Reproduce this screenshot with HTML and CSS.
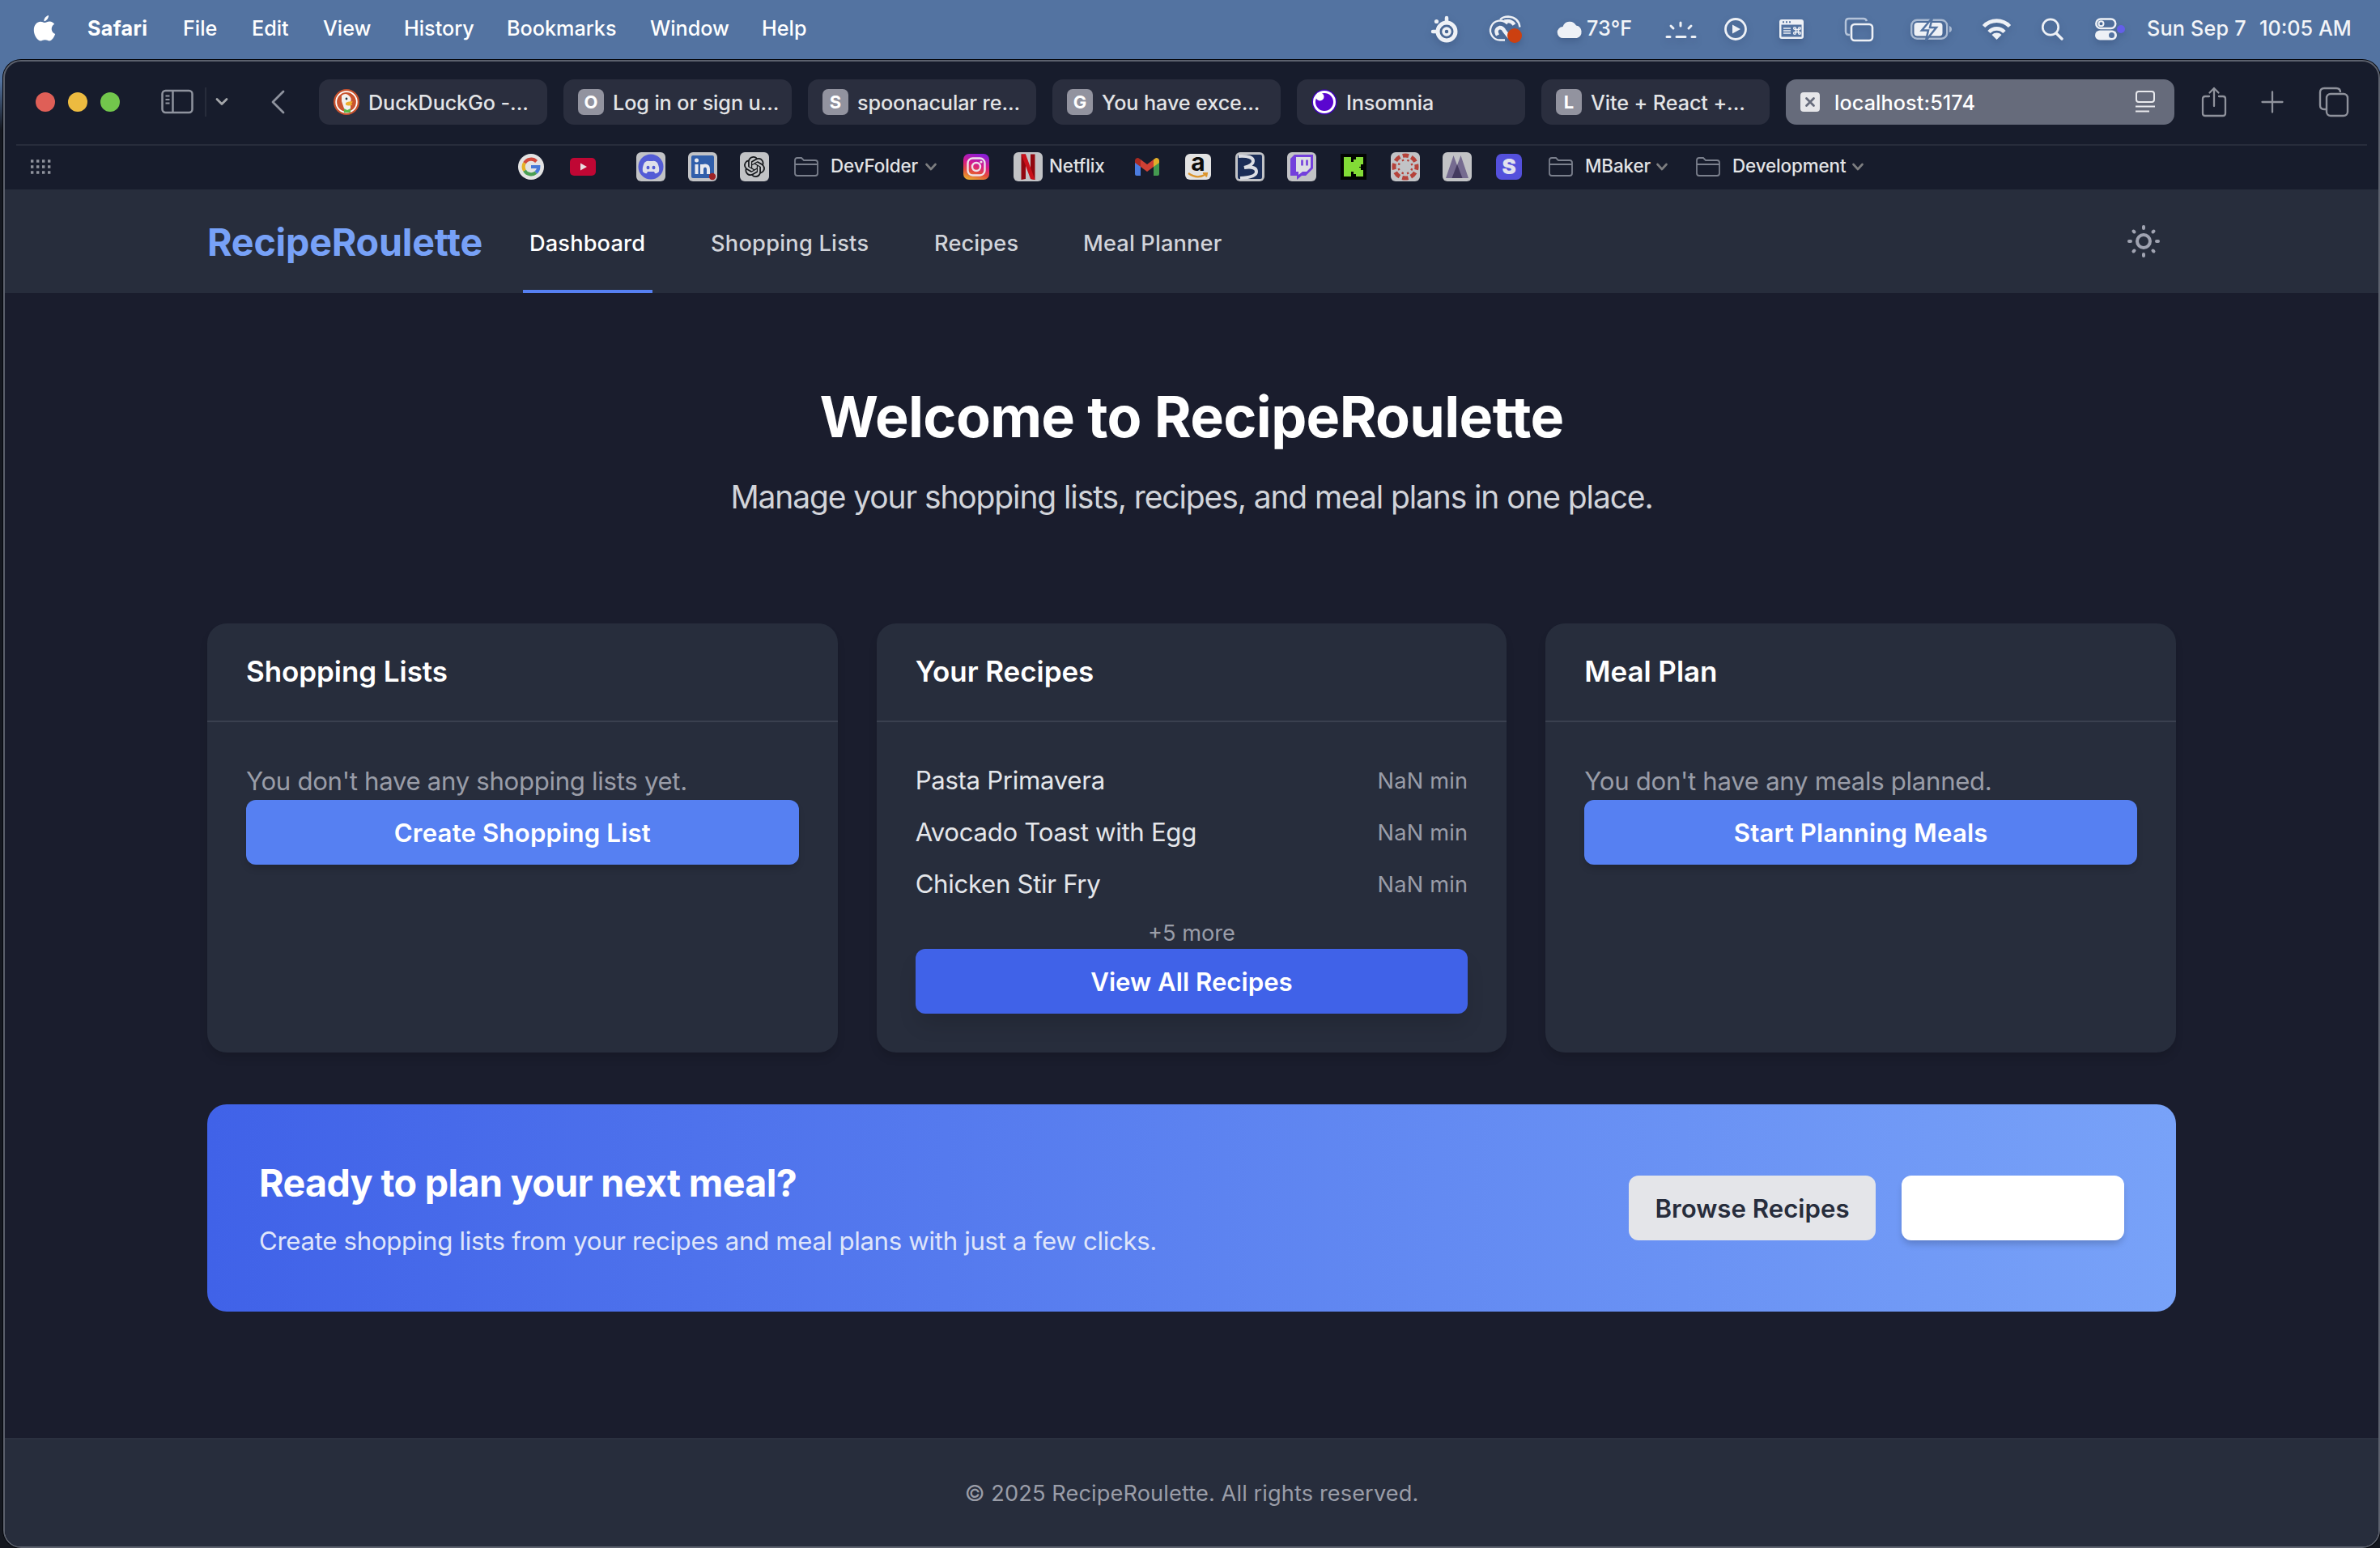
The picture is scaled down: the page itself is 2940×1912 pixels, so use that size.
FILE: index.html
```html
<!DOCTYPE html>
<html lang="en">
<head>
<meta charset="utf-8">
<title>RecipeRoulette</title>
<link rel="stylesheet" href="styles.css">
</head>
<body>
<svg class="defs" width="0" height="0">
  <symbol id="folder" viewBox="0 0 30 24"><path d="M1 20V4q0-3 3-3h5l3 3h14q3 0 3 3v13q0 3-3 3H4q-3 0-3-3zM1 9h28" fill="none" stroke="#7b808d" stroke-width="1.8"/></symbol>
  <symbol id="chev" viewBox="0 0 14 10"><path d="M1.5 2l5.500 6 5.500-6" fill="none" stroke="#7d7e80" stroke-width="2.600" stroke-linecap="round" stroke-linejoin="round"/></symbol>
</svg>

<div class="menubar">
  <nav class="menus">
    <svg width="28" height="34" viewBox="0 0 28 34"><path fill="#fff" d="M19 1c.3 3-2.300 7-5.600 7.200C13 5 16 1.500 19 1zM14 10c2 0 3.500-1.500 6.300-1.500 2.400 0 4.600 1.300 5.900 3.300-5.200 3-4.300 10.300 1 12.300-1.400 4-4.200 8.400-7.200 8.400-2 0-2.800-1.200-5.400-1.200s-3.400 1.200-5.300 1.200C5.400 32.500.8 25.600.8 19.200c0-6.600 4.300-10.400 8.200-10.400 2.200 0 3.600 1.200 5 1.200z"/></svg>
    <span class="app">Safari</span><span>File</span><span>Edit</span><span>View</span><span>History</span><span>Bookmarks</span><span>Window</span><span>Help</span>
  </nav>
  <div class="status">
    <svg width="40" height="40" viewBox="0 0 40 40"><g transform="translate(4 4)"><circle cx="19" cy="19" r="11" fill="none" stroke="#eef1f6" stroke-width="5"/><circle cx="19" cy="19" r="4" fill="none" stroke="#eef1f6" stroke-width="3.500"/><path d="M19 2v6M2 19h6" stroke="#eef1f6" stroke-width="4.500" stroke-linecap="round"/><circle cx="6.500" cy="6.500" r="2.600" fill="#eef1f6"/></g></svg>
    <svg width="44" height="40" viewBox="0 0 44 40"><g fill="none" stroke="#eef1f6"><path d="M15 8Q19 4.500 25 4.500q13 1 14.500 13" stroke-width="2.300"/><path d="M21 33.500H15.500A12 12 0 1 1 24 13.500" stroke-width="2.300"/><path d="M20.500 10.500q8-2 12 4" stroke-width="4.500"/><path d="M12 27.500q-4-7 2.500-9.500 4 0 6 4.500l6 7.500" stroke-width="4.500"/></g><circle cx="33" cy="28" r="9" fill="#cc4010"/></svg>
    <svg width="34" height="40" viewBox="0 0 34 40"><path fill="#eef1f6" d="M9 31a7 7 0 0 1-.5-14A9 9 0 0 1 25 15.500 8 8 0 0 1 26 31z"/></svg>
    <span class="temp">73°F</span>
    <svg width="42" height="40" viewBox="0 0 42 40"><path d="M4 29.500h4M16 29.500h11M35 29.500h4M21 12v4M9 16l3 3M34 16l-3 3" stroke="#eef1f6" stroke-width="3" stroke-linecap="round"/></svg>
    <svg width="32" height="40" viewBox="0 0 32 40"><circle cx="16" cy="20" r="12.500" fill="none" stroke="#eef1f6" stroke-width="2.800"/><path d="M12 14.500v11l10-5.500z" fill="#eef1f6"/></svg>
    <svg width="34" height="40" viewBox="0 0 34 40"><rect x="2" y="8" width="30" height="24" rx="3" fill="#eef1f6"/><rect x="4.500" y="14.500" width="25" height="15" fill="#5373a1"/><path d="M7 19h9M7 22h9M7 25h9" stroke="#eef1f6" stroke-width="1.600"/><path d="M6 11.200h2M10 11.200h2M14 11.200h2" stroke="#5373a1" stroke-width="2"/><path d="M21 20.500h6M21 23.500h6M22.500 19v6M25.500 19v6" stroke="#eef1f6" stroke-width="1.500"/><g fill="none" stroke="#eef1f6" stroke-width="1.300"><circle cx="21" cy="19" r="1.400"/><circle cx="27" cy="19" r="1.400"/><circle cx="21" cy="25" r="1.400"/><circle cx="27" cy="25" r="1.400"/></g></svg>
    <svg width="40" height="40" viewBox="0 0 40 40"><path d="M8 27H7q-4 0-4-4V11q0-4 4-4h18q3 0 4 3" fill="none" stroke="#b4c3d9" stroke-width="2.500"/><rect x="10" y="14" width="26" height="20" rx="4" fill="none" stroke="#eef1f6" stroke-width="2.600"/></svg>
    <svg width="54" height="40" viewBox="0 0 54 40"><rect x="3.200" y="8.700" width="44" height="23" rx="7" fill="none" stroke="#a9bad2" stroke-width="2.400"/><path d="M50 16v8q3-1 3-4t-3-4z" fill="#a9bad2"/><rect x="6.500" y="12" width="35" height="16.500" rx="4" fill="#eef1f6"/><path d="M29 6L16 21.500h8L21 34l13-16h-8z" fill="#eef1f6" stroke="#5373a1" stroke-width="2.500"/></svg>
    <svg width="40" height="40" viewBox="0 0 40 40"><g fill="none" stroke="#eef1f6" stroke-width="4.600"><path d="M3.500 16.500a22 22 0 0 1 32 0"/><path d="M10 23.500a13 13 0 0 1 19 0"/></g><path d="M13.500 27a8.500 8.500 0 0 1 12 0l-6 6z" fill="#eef1f6"/></svg>
    <svg width="32" height="40" viewBox="0 0 32 40"><circle cx="13" cy="17.500" r="9.700" fill="none" stroke="#eef1f6" stroke-width="2.700"/><path d="M20 25l7 7" stroke="#eef1f6" stroke-width="3.400" stroke-linecap="round"/></svg>
    <svg width="46" height="40" viewBox="0 0 46 40"><rect x="3.300" y="7.500" width="24" height="11.500" rx="5.700" fill="none" stroke="#eef1f6" stroke-width="2.500"/><circle cx="9.500" cy="13.200" r="3" fill="none" stroke="#eef1f6" stroke-width="2"/><rect x="2" y="21.500" width="27" height="12" rx="6" fill="#eef1f6"/><circle cx="22.500" cy="27.500" r="3.500" fill="#5373a1"/><circle cx="34" cy="20" r="5" fill="#635fe8"/></svg>
    <span class="date">Sun Sep 7</span>
    <span class="time">10:05 AM</span>
  </div>
</div>

<div class="window">
  <div class="toolbar">
    <div class="lights"><i class="red"></i><i class="yellow"></i><i class="green"></i></div>
    <svg class="side" width="40" height="32" viewBox="0 0 40 32"><g fill="none" stroke="#8f939e" stroke-width="2.500"><rect x="1.500" y="2" width="37" height="27" rx="4"/><path d="M14.500 2v27"/><path d="M5.500 8.500h5M5.500 13h5M5.500 17.500h5" stroke-width="2"/></g></svg>
    <i class="vline"></i>
    <svg class="drop" width="16" height="12" viewBox="0 0 16 12"><path d="M2 2.500l6 6 6-6" fill="none" stroke="#a5a7ab" stroke-width="2.800" stroke-linecap="round" stroke-linejoin="round"/></svg>
    <svg class="back" width="20" height="32" viewBox="0 0 20 32"><path d="M16 3L3 16l13 13" fill="none" stroke="#8f939e" stroke-width="2.800" stroke-linecap="round" stroke-linejoin="round"/></svg>
    <div class="tabs">
      <div class="tab"><svg width="32" height="32" viewBox="0 0 32 32"><circle cx="16" cy="16" r="16" fill="#c9532f"/><circle cx="16" cy="16" r="12.800" fill="#c9532f" stroke="#fff" stroke-width="1.800"/><path d="M10 8q5-4 9 0 4 3 2 8v9q-4 2.500-7 2L10 15z" fill="#f3f0ee"/><path d="M15 17q4-2.500 9-1.500l-2 2.500 1.500 1.500q-5 2-8.500 0z" fill="#eeb02f"/><path d="M13 24l4 2 4-2v5h-8z" fill="#5cb848"/><circle cx="16" cy="12" r="1.400" fill="#223344"/></svg><span>DuckDuckGo -...</span></div>
      <div class="tab"><b class="fav">O</b><span>Log in or sign u...</span></div>
      <div class="tab"><b class="fav">S</b><span>spoonacular re...</span></div>
      <div class="tab"><b class="fav">G</b><span>You have exce...</span></div>
      <div class="tab"><svg width="32" height="32" viewBox="0 0 32 32"><circle cx="16" cy="16" r="15.500" fill="#4000bf"/><circle cx="16" cy="16" r="14" fill="#fff"/><circle cx="16" cy="16" r="11" fill="#5a06cf"/><circle cx="10.500" cy="9.500" r="5" fill="#fff"/></svg><span>Insomnia</span></div>
      <div class="tab"><b class="fav">L</b><span>Vite + React +...</span></div>
      <div class="tab active"><svg width="24" height="24" viewBox="0 0 24 24"><rect width="24" height="24" rx="4" fill="#e6e6e9"/><path d="M7.500 7.500l9 9M16.500 7.500l-9 9" stroke="#666b7b" stroke-width="2.800" stroke-linecap="round"/></svg><span>localhost:5174</span><svg class="reader" width="26" height="30" viewBox="0 0 26 30"><g fill="none" stroke="#e9eaee" stroke-width="2"><rect x="2" y="2" width="22" height="13" rx="3"/><path d="M1 20.500h24M1 26.500h17"/></g></svg></div>
    </div>
    <svg class="share" width="32" height="40" viewBox="0 0 32 40"><g fill="none" stroke="#8f929c" stroke-width="2.300" stroke-linecap="round" stroke-linejoin="round"><path d="M10 13H5q-3 0-3 3v18q0 3 3 3h22q3 0 3-3V16q0-3-3-3h-5M16 25V3M10.500 8.500L16 3l5.500 5.500"/></g></svg>
    <svg class="plus" width="28" height="28" viewBox="0 0 28 28"><path d="M14 1.500v25M1.500 14h25" stroke="#8f929c" stroke-width="2.300" stroke-linecap="round"/></svg>
    <svg class="stack" width="38" height="38" viewBox="0 0 38 38"><g fill="none" stroke="#8f929c" stroke-width="2.400"><path d="M9 28H7q-5 0-5-5V7q0-5 5-5h15q5 0 5 5"/><rect x="10" y="9" width="26" height="27" rx="5"/></g></svg>
  </div>

  <div class="bookmarks">
    <svg width="26" height="20" viewBox="0 0 26 20"><path d="M1 3h25M1 10h25M1 17h25" stroke="#8f929c" stroke-width="3.600" stroke-dasharray="3.400 3.600"/></svg>
    <svg width="32" height="32" viewBox="0 0 32 32"><circle cx="16" cy="16" r="16" fill="#e3e3e3"/><g fill="none" stroke-width="4.200"><path d="M22.600 9.400A9.300 9.300 0 0 0 8 11.300" stroke="#d1493c"/><path d="M8 11.300a9.300 9.300 0 0 0 0 9.400" stroke="#e5b125"/><path d="M8 20.700a9.300 9.300 0 0 0 14 2.400" stroke="#4a9f52"/><path d="M22 23.100q3.300-2.600 3.300-7.100H16" stroke="#4679d8"/></g></svg>
    <svg width="32" height="22" viewBox="0 0 32 22"><rect width="32" height="22" rx="5" fill="#c00734"/><path d="M13 6.500v9l8-4.500z" fill="#e9dfe2"/></svg>
    <svg width="36" height="36" viewBox="0 0 36 36"><rect width="36" height="36" rx="6" fill="#c2c3c6"/><circle cx="18" cy="18" r="15.500" fill="#535cd6"/><path d="M10 13q3-3 6-2h4q3-1 6 2 3 6 2 11-3 3-5 2l-1-2h-8l-1 2q-2 1-5-2-1-5 2-11z" fill="#dfe0ea"/><ellipse cx="14.500" cy="19" rx="2" ry="2.300" fill="#535cd6"/><ellipse cx="21.500" cy="19" rx="2" ry="2.300" fill="#535cd6"/></svg>
    <svg width="36" height="36" viewBox="0 0 36 36"><rect width="36" height="36" rx="6" fill="#c2c3c6"/><rect x="4" y="4" width="28" height="28" rx="2" fill="#315fab"/><path d="M10.500 15v12M17 15v12M17 21q0-4.500 4-4.500t4 4.500v6" fill="none" stroke="#e8eaf0" stroke-width="4"/><circle cx="10.500" cy="10" r="2.500" fill="#e8eaf0"/><circle cx="30" cy="30" r="4.200" fill="#9e2226"/></svg>
    <svg width="36" height="36" viewBox="0 0 36 36"><rect width="36" height="36" rx="6" fill="#c2c3c6"/><path transform="translate(5 5) scale(1.083)" fill="#15171b" d="M22.2819 9.8211a5.9847 5.9847 0 0 0-.5157-4.9108 6.0462 6.0462 0 0 0-6.5098-2.9A6.0651 6.0651 0 0 0 4.9807 4.1818a5.9847 5.9847 0 0 0-3.9977 2.9 6.0462 6.0462 0 0 0 .7427 7.0966 5.98 5.98 0 0 0 .511 4.9107 6.051 6.051 0 0 0 6.5146 2.9001A5.9847 5.9847 0 0 0 13.2599 24a6.0557 6.0557 0 0 0 5.7718-4.2058 5.9894 5.9894 0 0 0 3.9977-2.9001 6.0557 6.0557 0 0 0-.7475-7.0729zm-9.022 12.6081a4.4755 4.4755 0 0 1-2.8764-1.0408l.1419-.0804 4.7783-2.7582a.7948.7948 0 0 0 .3927-.6813v-6.7369l2.02 1.1686a.071.071 0 0 1 .038.052v5.5826a4.504 4.504 0 0 1-4.4945 4.4944zm-9.6607-4.1254a4.4708 4.4708 0 0 1-.5346-3.0137l.142.0852 4.783 2.7582a.7712.7712 0 0 0 .7806 0l5.8428-3.3685v2.3324a.0804.0804 0 0 1-.0332.0615L9.74 19.9502a4.4992 4.4992 0 0 1-6.1408-1.6464zM2.3408 7.8956a4.485 4.485 0 0 1 2.3655-1.9728V11.6a.7664.7664 0 0 0 .3879.6765l5.8144 3.3543-2.0201 1.1685a.0757.0757 0 0 1-.071 0l-4.8303-2.7865A4.504 4.504 0 0 1 2.3408 7.872zm16.5963 3.8558L13.1038 8.364 15.1192 7.2a.0757.0757 0 0 1 .071 0l4.8303 2.7913a4.4944 4.4944 0 0 1-.6765 8.1042v-5.6772a.79.79 0 0 0-.407-.667zm2.0107-3.0231l-.142-.0852-4.7735-2.7818a.7759.7759 0 0 0-.7854 0L9.409 9.2297V6.8974a.0662.0662 0 0 1 .0284-.0615l4.8303-2.7866a4.4992 4.4992 0 0 1 6.6802 4.66zM8.3065 12.863l-2.02-1.1638a.0804.0804 0 0 1-.038-.0567V6.0742a4.4992 4.4992 0 0 1 7.3757-3.4537l-.142.0805L8.704 5.459a.7948.7948 0 0 0-.3927.6813zm1.0976-2.3654l2.602-1.4998 2.6069 1.4998v2.9994l-2.5974 1.4997-2.6067-1.4997Z"/></svg>
    <svg width="30" height="24"><use href="#folder"/></svg>
    <span>DevFolder</span>
    <svg width="14" height="10"><use href="#chev"/></svg>
    <svg width="32" height="32" viewBox="0 0 32 32"><defs><linearGradient id="ig" x1="0.300" y1="1" x2="0.600" y2="0"><stop offset="0" stop-color="#e8a52f"/><stop offset=".3" stop-color="#e34c3c"/><stop offset=".6" stop-color="#d51a8c"/><stop offset="1" stop-color="#8a1fd6"/></linearGradient></defs><rect width="32" height="32" rx="7" fill="url(#ig)"/><g fill="none" stroke="#eee2ea" stroke-width="2.400"><rect x="5.500" y="5.500" width="21" height="21" rx="6"/><circle cx="16" cy="16" r="5"/></g><circle cx="22" cy="10" r="1.600" fill="#eee2ea"/></svg>
    <svg width="36" height="36" viewBox="0 0 36 36"><rect width="36" height="36" rx="6" fill="#c2c3c6"/><path d="M9.500 2.500H15V33l-5.500 1zM21 2.500h5.500V34L21 33z" fill="#91070f"/><path d="M9.500 2.500H15L26.500 34l-5.500-1z" fill="#c9101a"/></svg>
    <span>Netflix</span>
    <svg width="32" height="24" viewBox="0 0 32 24"><path d="M1 4v17q0 2 2 2h5V8z" fill="#4b7ce0"/><path d="M24 8v15h5q2 0 2-2V4z" fill="#449a50"/><path d="M1 5q0-4 4-4l3 2v9L1 7z" fill="#a92a22"/><path d="M31 5q0-4-4-4l-3 2v9l7-5z" fill="#e2ae2a"/><path d="M8 3l8 6 8-6v9l-8 6-8-6z" fill="#cf4034"/></svg>
    <div class="amazon"><span>a</span><svg width="26" height="8" viewBox="0 0 26 8"><path d="M1 1q11 8 22 1M19 1l5-.5-1 5" fill="none" stroke="#dc952c" stroke-width="2.200"/></svg></div>
    <svg width="36" height="36" viewBox="0 0 36 36"><rect width="36" height="36" rx="6" fill="#c2c3c6"/><rect x="3" y="3" width="30" height="30" rx="2" fill="#1b2d57"/><path d="M4 5q18-1 18 6 0 5-11 8 15-2 15 5 0 7-20 8" fill="none" stroke="#dcdee4" stroke-width="4"/></svg>
    <svg width="36" height="36" viewBox="0 0 36 36"><rect width="36" height="36" rx="6" fill="#c2c3c6"/><path d="M4 8l5-5h23v17l-9 9h-5l-6 5v-5H4z" fill="#7340dc"/><path d="M11 6h18v13l-5 5h-5l-5 4v-4h-3z" fill="#dedfe4"/><path d="M18.500 9.500v7M24.500 9.500v7" stroke="#7340dc" stroke-width="2.600"/></svg>
    <svg width="32" height="32" viewBox="0 0 32 32"><path fill="#020402" d="M0 0h32v32H0z"/><path d="M4 4h9v6h3V7h3V4h9v9h-3v3h-2v1h2v3h3v8h-9v-3h-3v-3h-3v6H4z" fill="#83dc36"/></svg>
    <svg width="36" height="36" viewBox="0 0 36 36"><rect width="36" height="36" rx="6" fill="#c2c3c6"/><circle cx="18" cy="18" r="14" fill="none" stroke="#b5423a" stroke-width="5" stroke-dasharray="7.500 3.495" stroke-dashoffset="3.750"/><circle cx="18" cy="18" r="8.500" fill="none" stroke="#b5423a" stroke-width="2.400" stroke-dasharray="2.400 4.276" stroke-dashoffset="-2.138"/></svg>
    <svg width="36" height="36" viewBox="0 0 36 36"><rect width="36" height="36" rx="6" fill="#c2c3c6"/><path d="M4 32L13.500 4l4.500 12 4.500-12L32 32z" fill="#756b90"/><path d="M11.500 32L18 15l6.500 17z" fill="#443a60"/></svg>
    <div class="spoon">S</div>
    <svg width="30" height="24"><use href="#folder"/></svg>
    <span>MBaker</span>
    <svg width="14" height="10"><use href="#chev"/></svg>
    <svg width="30" height="24"><use href="#folder"/></svg>
    <span>Development</span>
    <svg width="14" height="10"><use href="#chev"/></svg>
  </div>

  <div class="page">
    <header class="site-header">
      <div class="container bar">
        <div class="brand">RecipeRoulette</div>
        <nav class="links">
          <a class="current">Dashboard</a><a class="l-shop">Shopping Lists</a><a class="l-rec">Recipes</a><a class="l-meal">Meal Planner</a>
        </nav>
        <svg class="sun" width="40" height="40" viewBox="0 0 40 40"><g fill="none" stroke="#a0a3b1" stroke-width="4" stroke-linecap="round"><circle cx="20" cy="20" r="8"/><path d="M20 2v2M20 36v2M2 20h2M36 20h2M7.500 7.500l1 1M31.500 31.500l1 1M7.500 32.500l1-1M31.500 8.500l1-1"/></g></svg>
      </div>
    </header>

    <main class="container">
      <section class="hero">
        <h1>Welcome to RecipeRoulette</h1>
        <p>Manage your shopping lists, recipes, and meal plans in one place.</p>
      </section>

      <section class="cards">
        <article class="card">
          <h2>Shopping Lists</h2>
          <div class="card-body">
            <p class="empty">You don't have any shopping lists yet.</p>
            <button class="btn">Create Shopping List</button>
          </div>
        </article>
        <article class="card">
          <h2>Your Recipes</h2>
          <div class="card-body">
            <ul class="recipes">
              <li><span>Pasta Primavera</span><small>NaN min</small></li>
              <li><span>Avocado Toast with Egg</span><small>NaN min</small></li>
              <li><span>Chicken Stir Fry</span><small>NaN min</small></li>
            </ul>
            <p class="more">+5 more</p>
            <button class="btn deep">View All Recipes</button>
          </div>
        </article>
        <article class="card">
          <h2>Meal Plan</h2>
          <div class="card-body">
            <p class="empty">You don't have any meals planned.</p>
            <button class="btn">Start Planning Meals</button>
          </div>
        </article>
      </section>

      <section class="banner">
        <div>
          <h3>Ready to plan your next meal?</h3>
          <p>Create shopping lists from your recipes and meal plans with just a few clicks.</p>
        </div>
        <div class="actions">
          <button class="btn light">Browse Recipes</button>
          <button class="btn blank"></button>
        </div>
      </section>
    </main>

    <footer class="site-footer">© 2025 RecipeRoulette. All rights reserved.</footer>
  </div>
</div>
</body>
</html>
```

FILE: styles.css
```css
* { box-sizing: border-box; margin: 0; padding: 0; }
body {
  width: 2940px;
  height: 1912px;
  overflow: hidden;
  display: flex;
  flex-direction: column;
  background: linear-gradient(#5373a1 0 100px, #14171f 160px);
  font-family: Inter, "Liberation Sans", sans-serif;
  -webkit-font-smoothing: antialiased;
}
svg { display: block; flex: none; }
.defs { position: absolute; }
span, a { white-space: nowrap; }

/* macOS menu bar */
.menubar {
  height: 72px;
  flex: none;
  display: flex;
  justify-content: space-between;
  background: #5373a1;
  color: #fff;
  font-size: 25.2px;
  font-weight: 500;
  letter-spacing: 0;
  line-height: 68px;
}
.menus {
  display: grid;
  grid-template-columns: 67px 118px 85px 88px 100px 127px 177px 138px 60px;
  padding-left: 41px;
  align-items: center;
}
.menus svg { margin-top: -2px; }
.menus span, .status span { padding-bottom: 2px; }
.app { font-weight: 700; letter-spacing: 0.3px; }
.status {
  display: grid;
  grid-template-columns: 74px 84px 38px 95px 73px 68px 81px 81px 89px 73px 66px 66px 139px 149px;
  align-items: center;
  color: #f3f5f8;
}
.status svg { filter: drop-shadow(0 4px 4px rgba(20, 40, 80, .25)); }
.temp { letter-spacing: 0.1px; }
.date { letter-spacing: 0.2px; }
.time { letter-spacing: 0; }

/* browser window */
.window {
  flex: 1;
  min-height: 0;
  margin: 2px 0 0 4px;
  border: 2px solid #5c616d;
  border-radius: 22px;
  box-shadow: 0 0 0 1px #05070c;
  overflow: hidden;
  display: flex;
  flex-direction: column;
  background: #171c2c;
}
.toolbar {
  height: 102px;
  flex: none;
  display: flex;
  align-items: center;
  padding: 0 31px 2px 38px;
}
.lights { display: flex; gap: 16px; margin-right: 51px; }
.lights i { width: 24px; height: 24px; border-radius: 50%; }
.red { background: #df5f57; }
.yellow { background: #edbb40; }
.green { background: #72c64c; }
.side { margin-right: 14px; }
.vline { width: 2px; height: 36px; background: #272c3b; margin-right: 11px; }
.drop { margin-right: 52px; }
.back { margin-right: 40px; }
.tabs { display: flex; gap: 20px; }
.tab {
  width: 282px;
  height: 56px;
  border-radius: 13px;
  background: #2a2e3e;
  display: flex;
  align-items: center;
  padding: 0 18px;
  gap: 11px;
  color: #e3e4e6;
  font-size: 25.2px;
  font-weight: 500;
  letter-spacing: -0.1px;
}
.tab span { padding-top: 1px; }
.tab.active { width: 480px; background: #666b7b; color: #fff; gap: 18px; letter-spacing: 0.1px; }
.reader { margin-left: auto; margin-right: 5px; }
.fav {
  width: 32px;
  height: 32px;
  flex: none;
  border-radius: 7px;
  background: #92939f;
  color: #fff;
  text-align: center;
  font-size: 22px;
  font-weight: 700;
  line-height: 33px;
}
.share { margin-left: 33px; }
.plus { margin-left: 42px; }
.stack { margin-left: 43px; }

.bookmarks {
  height: 56px;
  flex: none;
  margin: 0 14px;
  border-top: 2px solid #272c3b;
  display: grid;
  grid-template-columns: 603px 64px 82px 64px 64px 67px 46px 116px 47px 62px 45px 104px 63px 62px 64px 66px 62px 64px 66px 65px 46px 87px 49px 46px 147px 14px;
  padding-left: 17px;
  padding-bottom: 2px;
  align-items: center;
  color: #e3e4e6;
  font-size: 22.4px;
  font-weight: 500;
  letter-spacing: -0.1px;
  line-height: 48px;
}
.bookmarks > span { padding-bottom: 2px; margin-left: -1px; }
.amazon {
  width: 32px;
  height: 32px;
  border-radius: 6px;
  background: #e3e3e3;
  color: #0c0c0c;
  display: flex;
  flex-direction: column;
  align-items: center;
  font-size: 30px;
  font-weight: 700;
  line-height: 20px;
}
.amazon span { height: 23px; }
.spoon {
  width: 32px;
  height: 32px;
  border-radius: 7px;
  background: #5450dc;
  color: #e2e2ee;
  text-align: center;
  font-size: 26px;
  font-weight: 900;
  line-height: 32px;
}

/* site */
.page {
  flex: 1;
  min-height: 0;
  background: #1a1d2d;
  display: flex;
  flex-direction: column;
}
.container { width: 2432px; margin: 0 auto; }
.site-header { height: 128px; flex: none; background: #272d3c; }
.bar { height: 128px; display: flex; align-items: center; }
.brand {
  width: 390px;
  padding-top: 2px;
  color: #77a1f7;
  font-size: 46.6px;
  font-weight: 700;
  letter-spacing: -0.2px;
}
.links { display: flex; height: 128px; gap: 64px; flex: 1; }
.links a {
  padding: 7px 8px 0;
  border-bottom: 4px solid transparent;
  color: #d1d4da;
  font-size: 27.2px;
  font-weight: 500;
  letter-spacing: 0.15px;
  line-height: 120px;
}
.links .current { width: 160px; color: #fff; border-color: #5680f2; }
.links .l-shop { width: 212px; letter-spacing: 0.25px; }
.links .l-rec { width: 120px; }
.sun { margin-right: 20px; }

.hero { padding-top: 113px; height: 408px; text-align: center; }
h1 {
  color: #fff;
  font-size: 70px;
  font-weight: 700;
  line-height: 80px;
  letter-spacing: -0.66px;
}
.hero p {
  margin-top: 31px;
  color: #d1d4da;
  font-size: 39px;
  line-height: 56px;
  letter-spacing: -1.12px;
}
.cards { display: grid; grid-template-columns: repeat(3, 1fr); gap: 48px; height: 530px; }
.card {
  background: #272d3c;
  border-radius: 24px;
  box-shadow: 0 8px 12px -2px rgba(0, 0, 0, .15);
}
.card h2 {
  height: 122px;
  padding-left: 48px;
  border-bottom: 2px solid #3a404f;
  color: #fff;
  font-size: 35px;
  font-weight: 600;
  line-height: 118px;
  letter-spacing: -0.07px;
}
.card-body { padding: 48px; }
.empty, .recipes li, .banner p {
  font-size: 31.2px;
  line-height: 50px;
  height: 48px;
  letter-spacing: -0.32px;
}
.empty { color: #9a9da8; }
.btn {
  display: block;
  width: 100%;
  height: 80px;
  padding-top: 1px;
  border: 0;
  border-radius: 12px;
  background: #5680f2;
  color: #fff;
  font-family: inherit;
  font-size: 31.2px;
  font-weight: 600;
  letter-spacing: 0.15px;
  box-shadow: 0 6px 10px -2px rgba(0, 0, 0, .2);
}
.btn.deep { background: #4062e8; letter-spacing: 0; box-shadow: 0 16px 26px -4px rgba(0, 0, 0, .13); }
.recipes { list-style: none; }
.recipes li {
  display: flex;
  justify-content: space-between;
  align-items: center;
  margin-bottom: 16px;
  color: #e4e6ea;
}
.recipes small, .more {
  color: #9a9da8;
  font-size: 27.2px;
  letter-spacing: 0.2px;
}
.recipes small { padding-top: 1px; }
.more { height: 40px; line-height: 42px; text-align: center; letter-spacing: 0; }

.banner {
  margin-top: 64px;
  height: 256px;
  padding: 64px;
  border-radius: 24px;
  background: linear-gradient(90deg, #4062e8, #78a2f8);
  display: flex;
  justify-content: space-between;
  align-items: center;
}
.banner h3 {
  color: #fff;
  font-size: 46.6px;
  font-weight: 700;
  height: 64px;
  line-height: 66px;
  letter-spacing: -0.63px;
  margin-bottom: 16px;
}
.banner p { color: #dfe5fa; }
.actions { display: flex; gap: 32px; }
.btn.light { width: 305px; background: #e4e5e9; color: #272d3c; letter-spacing: 0; box-shadow: none; }
.btn.blank { width: 275px; background: #fff; }
.site-footer {
  margin-top: auto;
  height: 134px;
  flex: none;
  border-top: 2px solid #2b3140;
  background: #272d3c;
  color: #9a9da8;
  font-size: 27.2px;
  letter-spacing: 0.1px;
  line-height: 134px;
  text-align: center;
}
```
